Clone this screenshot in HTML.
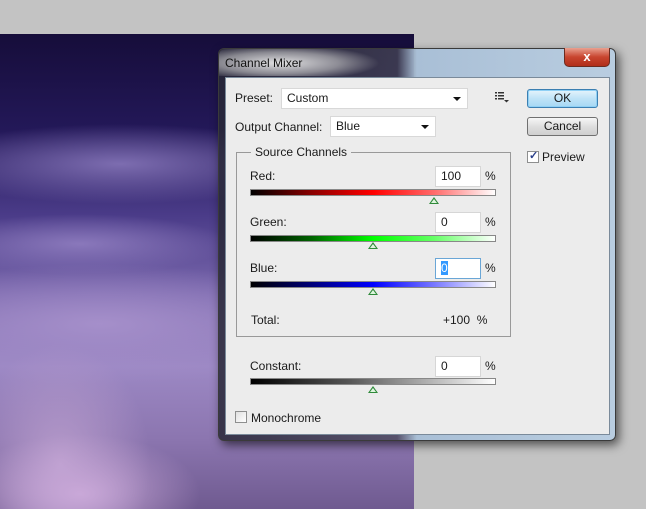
<!DOCTYPE html>
<html><head><style>
*{margin:0;padding:0;box-sizing:border-box}
body{width:646px;height:509px;overflow:hidden;background:#c3c3c3;position:relative;font-family:"Liberation Sans",sans-serif;font-size:12px;color:#1a1a1a}
.a{position:absolute}
#photo{left:0;top:34px;width:414px;height:475px;background:
radial-gradient(ellipse 120px 60px at 80px 460px,#c9a8d8,transparent),
radial-gradient(ellipse 90px 120px at 60px 430px,#b89ccc,transparent),
radial-gradient(ellipse 250px 60px at 100px 290px,#a58fca,transparent),
radial-gradient(ellipse 200px 40px at 120px 130px,#7d6db0,transparent),
radial-gradient(ellipse 150px 30px at 80px 210px,#8a78bb,transparent),
linear-gradient(#160d3a 0%,#231858 20%,#4a3b88 38%,#7a68ad 55%,#9c88c4 70%,#8c76b0 85%,#6f5a90 100%)}
#win{left:218px;top:48px;width:398px;height:393px;border-radius:6px;border:1px solid #3a3a3a;background:linear-gradient(90deg,rgba(40,40,55,.85) 0%,rgba(70,70,85,.75) 45%,#a9bfd6 50%,#b9cde0 100%);box-shadow:3px 4px 10px rgba(0,0,0,.6)}
#glow{left:219px;top:49px;width:190px;height:27px;background:radial-gradient(ellipse 100px 18px at 60px 14px,rgba(235,235,235,.95),rgba(200,200,200,.6) 60%,transparent);border-radius:6px 0 0 0}
#content{left:225px;top:77px;width:385px;height:358px;background:#ececec;border:1px solid #7a8a9a}
.lbl{position:absolute;line-height:14px}
.dd{position:absolute;background:#fff;border:1px solid #d8d8d8;padding-left:5px;line-height:19px}
.dd:after{content:"";position:absolute;right:6px;top:8px;border:4px solid transparent;border-top:4px solid #111;border-bottom:0}
.inp{position:absolute;background:#fff;border:1px solid #d6d6d6;width:46px;height:21px;padding-left:5px;line-height:19px}
.btn{position:absolute;width:71px;height:19px;border:1px solid #707070;border-radius:3px;text-align:center;line-height:17px;background:linear-gradient(#f6f6f6,#dedede 50%,#cfcfcf)}
.sl{position:absolute;left:250px;width:246px;height:7px;border:1px solid #888}
.th{position:absolute;width:0;height:0;border-left:5px solid transparent;border-right:5px solid transparent;border-bottom:7px solid #2f8a3a}
.th:after{content:"";position:absolute;left:-3px;top:2px;border-left:3px solid transparent;border-right:3px solid transparent;border-bottom:4px solid #dff5df}
.cb{position:absolute;width:12px;height:12px;border:1px solid #8e8f8f;background:linear-gradient(135deg,#e0e0e0,#fff)}
</style></head><body>
<div id="photo" class="a"></div>
<div id="win" class="a"></div>
<div id="glow" class="a"></div>
<div class="a" style="left:225px;top:56px;font-size:12px;color:#111">Channel Mixer</div>
<div class="a" style="left:564px;top:48px;width:46px;height:19px;border:1px solid #6b2b20;border-top:0;border-radius:0 0 5px 5px;background:linear-gradient(#e9a08f,#c8452f 50%,#b02e1a);color:#fff;text-align:center;font-weight:bold;font-size:13px;line-height:17px">x</div>
<div id="content" class="a"></div>

<div class="lbl" style="left:235px;top:91px">Preset:</div>
<div class="dd" style="left:281px;top:88px;width:187px;height:21px">Custom</div>
<svg class="a" style="left:495px;top:92px" width="14" height="11"><g fill="#333"><rect x="0" y="0" width="2" height="1.5"/><rect x="3" y="0" width="6" height="1.5"/><rect x="0" y="3" width="2" height="1.5"/><rect x="3" y="3" width="6" height="1.5"/><rect x="0" y="6" width="2" height="1.5"/><rect x="3" y="6" width="6" height="1.5"/><path d="M9 8h5l-2.5 2.5z"/></g></svg>
<div class="btn" style="left:527px;top:89px;border-color:#3c7fb1;background:linear-gradient(#e6f4fc,#bfe3f7 50%,#a6d8f4);box-shadow:0 0 0 1px #8fd0f5 inset">OK</div>
<div class="btn" style="left:527px;top:117px">Cancel</div>

<div class="lbl" style="left:235px;top:120px">Output Channel:</div>
<div class="dd" style="left:330px;top:116px;width:106px;height:21px">Blue</div>

<div class="cb" style="left:527px;top:151px;background:#fff"><span style="position:absolute;left:1px;top:-3px;color:#2a3f8a;font-size:11px;font-weight:bold">✓</span></div>
<div class="lbl" style="left:542px;top:150px">Preview</div>

<div class="a" style="left:236px;top:152px;width:275px;height:185px;border:1px solid #999"></div>
<div class="lbl" style="left:251px;top:145px;background:#ececec;padding:0 4px">Source Channels</div>

<div class="lbl" style="left:250px;top:169px">Red:</div>
<div class="inp" style="left:435px;top:166px">100</div>
<div class="lbl" style="left:485px;top:169px">%</div>
<div class="sl" style="top:189px;background:linear-gradient(90deg,#000,#8a0000 25%,#f00 50%,#ff6a6a 75%,#fff)"></div>
<div class="th" style="left:429px;top:197px"></div>

<div class="lbl" style="left:250px;top:215px">Green:</div>
<div class="inp" style="left:435px;top:212px">0</div>
<div class="lbl" style="left:485px;top:215px">%</div>
<div class="sl" style="top:235px;background:linear-gradient(90deg,#000,#006400 25%,#0f0 50%,#6f6 75%,#fff)"></div>
<div class="th" style="left:368px;top:242px"></div>

<div class="lbl" style="left:250px;top:261px">Blue:</div>
<div class="inp" style="left:435px;top:258px;border-color:#6aa6d6"><span style="background:#3399ff;color:#fff">0</span></div>
<div class="lbl" style="left:485px;top:261px">%</div>
<div class="sl" style="top:281px;background:linear-gradient(90deg,#000,#00007a 25%,#00f 50%,#77f 75%,#fff)"></div>
<div class="th" style="left:368px;top:288px"></div>

<div class="lbl" style="left:251px;top:313px">Total:</div>
<div class="lbl" style="left:443px;top:313px">+100&nbsp; %</div>

<div class="lbl" style="left:250px;top:359px">Constant:</div>
<div class="inp" style="left:435px;top:356px">0</div>
<div class="lbl" style="left:485px;top:359px">%</div>
<div class="sl" style="top:378px;background:linear-gradient(90deg,#000,#555 40%,#aaa 70%,#fff)"></div>
<div class="th" style="left:368px;top:386px"></div>

<div class="cb" style="left:235px;top:411px"></div>
<div class="lbl" style="left:251px;top:411px">Monochrome</div>
</body></html>
